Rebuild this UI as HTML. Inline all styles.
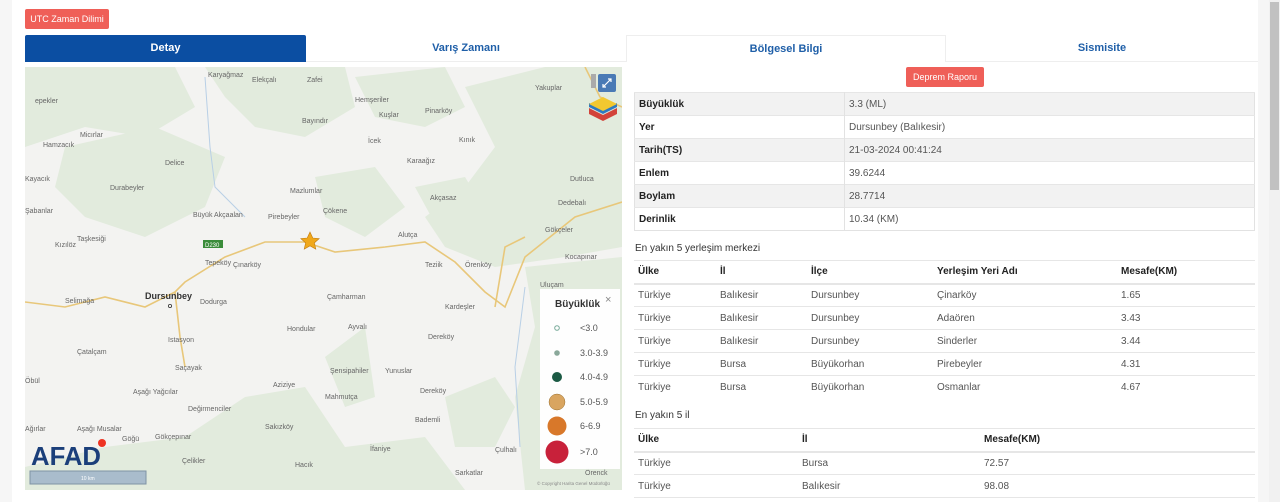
<!DOCTYPE html>
<html><head><meta charset="utf-8"><style>
*{box-sizing:border-box;margin:0;padding:0}
body{width:1280px;height:502px;overflow:hidden;background:#f6f6f6;font-family:"Liberation Sans",sans-serif;position:relative;color:#333}
.card{position:absolute;left:12px;top:0;width:1246px;height:502px;background:#fff}
.sb{position:absolute;left:1269px;top:0;width:11px;height:502px;background:#f1f1f1}
.sb div{position:absolute;left:1px;top:2px;width:9px;height:188px;background:#c1c1c1}
.btn{position:absolute;background:#ef5f58;color:#fff;font-size:9px;text-align:center;border-radius:2px;white-space:nowrap}
.tab{position:absolute;top:35px;height:27px;line-height:27px;text-align:center;font-size:11px;font-weight:bold;color:#1f5fa8}
.map{position:absolute;left:25px;top:67px;width:597px;height:423px;background:#f3f3f1;overflow:hidden}
.lbl{font-family:"Liberation Sans",sans-serif;font-size:7px;fill:#666}
table{position:absolute;border-collapse:collapse;font-size:10px}
td{height:23px;padding:0 4px;color:#555;border-top:1px solid #e6e6e6}
td.b,th{font-weight:bold;color:#222}
th{height:23px;text-align:left;padding:0 4px;border-top:1px solid #e6e6e6;border-bottom:2px solid #e6e6e6}
.st tr:nth-child(odd) td{background:#f2f2f2}
.st{border:1px solid #e2e2e2}
.st td:first-child{border-right:1px solid #e2e2e2}
.cap{position:absolute;font-size:10px;color:#333}
</style></head><body>
<div class="card"></div>
<div class="sb"><div></div></div>
<div class="btn" style="left:25px;top:9px;width:84px;height:20px;line-height:20px">UTC Zaman Dilimi</div>
<div class="tab" style="left:25px;width:281px;background:#0b4ea2;color:#fff;border-radius:2px 2px 0 0">Detay</div>
<div class="tab" style="left:306px;width:320px;border-bottom:1px solid #eee">Varış Zamanı</div>
<div class="tab" style="left:626px;width:320px;border:1px solid #eee;border-bottom:none">Bölgesel Bilgi</div>
<div class="tab" style="left:946px;width:312px;border-bottom:1px solid #eee">Sismisite</div>

<div class="map">
<svg width="597" height="423" viewBox="0 0 597 423">
<g fill="#e2ebdd">
<path d="M0 0 L150 0 L170 40 L120 70 L60 60 L0 80Z"/>
<path d="M40 80 L130 60 L200 90 L180 140 L120 170 L60 150 L30 120Z"/>
<path d="M180 0 L320 0 L330 40 L280 70 L230 60 L200 30Z"/>
<path d="M330 10 L420 0 L440 40 L400 60 L350 50Z"/>
<path d="M440 20 L520 0 L597 0 L597 180 L540 190 L470 200 L420 180 L400 150 L440 120 L470 80Z"/>
<path d="M290 110 L350 100 L380 140 L340 170 L300 150Z"/>
<path d="M390 120 L440 110 L470 160 L420 175Z"/>
<path d="M500 200 L597 190 L597 423 L500 423 L490 330 L510 260Z"/>
<path d="M300 290 L340 260 L350 330 L320 340Z"/>
<path d="M0 400 L80 380 L160 370 L220 330 L280 320 L320 380 L400 370 L440 423 L0 423Z"/>
<path d="M420 330 L470 310 L490 340 L470 380 L430 380Z"/>
</g>
<g fill="none" stroke="#e8c77a" stroke-width="1.6">
<path d="M0 235 L40 240 L80 230 L120 240 L150 225 L160 215 L200 190 L240 175 L280 175 L310 185 L360 180 L400 175 L430 195 L460 225 L480 240 L500 190 L550 150 L597 135"/>
<path d="M150 225 L155 270 L160 300"/>
<path d="M560 0 L575 30 L597 40"/>
<path d="M470 240 L480 180 L500 170"/>
</g>
<path d="M180 10 L185 80 L190 120 L220 150" fill="none" stroke="#b8cfe6" stroke-width="1"/>
<path d="M500 220 L490 300 L495 380" fill="none" stroke="#b8cfe6" stroke-width="1"/>
<g class="lbl">
<text x="183" y="10">Karyağmaz</text><text x="227" y="15">Elekçalı</text><text x="282" y="15">Zafei</text><text x="510" y="23">Yakuplar</text>
<text x="10" y="36">epekler</text><text x="330" y="35">Hemşeriler</text><text x="400" y="46">Pinarköy</text><text x="277" y="56">Bayındır</text><text x="354" y="50">Kuşlar</text>
<text x="18" y="80">Hamzacık</text><text x="55" y="70">Micırlar</text><text x="343" y="76">İcek</text><text x="434" y="75">Kınık</text>
<text x="140" y="98">Delice</text><text x="382" y="96">Karaağız</text>
<text x="0" y="114">Kayacık</text><text x="85" y="123">Durabeyler</text><text x="265" y="126">Mazlumlar</text><text x="545" y="114">Dutluca</text>
<text x="0" y="146">Şabanlar</text><text x="405" y="133">Akçasaz</text><text x="533" y="138">Dedebalı</text>
<text x="168" y="150">Büyük Akçaalan</text><text x="243" y="152">Pirebeyler</text><text x="298" y="146">Çökene</text>
<text x="52" y="174">Taşkesiği</text><text x="373" y="170">Alutça</text><text x="520" y="165">Gökçeler</text>
<text x="30" y="180">Kızılöz</text><text x="208" y="200">Çınarköy</text><text x="180" y="198">Tepeköy</text><text x="400" y="200">Teziik</text><text x="440" y="200">Örenköy</text><text x="540" y="192">Kocapınar</text>
<text x="40" y="236">Selimağa</text><text x="175" y="237">Dodurga</text><text x="302" y="232">Çamharman</text><text x="420" y="242">Kardeşler</text><text x="515" y="220">Uluçam</text>
<text x="262" y="264">Hondular</text><text x="323" y="262">Ayvalı</text><text x="143" y="275">Istasyon</text><text x="403" y="272">Dereköy</text>
<text x="52" y="287">Çatalçam</text><text x="150" y="303">Saçayak</text><text x="305" y="306">Şensipahiler</text><text x="360" y="306">Yunuslar</text>
<text x="0" y="316">Öbül</text><text x="248" y="320">Aziziye</text><text x="108" y="327">Aşağı Yağcılar</text><text x="395" y="326">Dereköy</text><text x="300" y="332">Mahmutça</text>
<text x="163" y="344">Değirmenciler</text><text x="240" y="362">Sakızköy</text><text x="390" y="355">Bademli</text>
<text x="0" y="364">Ağırlar</text><text x="52" y="364">Aşağı Musalar</text><text x="130" y="372">Gökçepınar</text><text x="97" y="374">Göğü</text>
<text x="345" y="384">İfaniye</text><text x="470" y="385">Çulhalı</text><text x="157" y="396">Çelikler</text><text x="270" y="400">Hacık</text><text x="430" y="408">Sarkatlar</text><text x="560" y="408">Örenck</text>
</g>
<text x="120" y="232" font-family="Liberation Sans" font-size="9" font-weight="bold" fill="#333">Dursunbey</text>
<circle cx="145" cy="239" r="1.6" fill="none" stroke="#333" stroke-width="0.8"/>
<rect x="178" y="173" width="20" height="8" fill="#3a8c3a"/><text x="180" y="180" font-size="6" fill="#fff" font-family="Liberation Sans">D230</text>
<path d="M285 165 l2.8 6 6.4 .6 -4.8 4.3 1.4 6.3 -5.8 -3.3 -5.8 3.3 1.4 -6.3 -4.8 -4.3 6.4 -.6z" fill="#f0a81a" stroke="#c07a10" stroke-width=".6"/>
<rect x="566" y="7" width="5" height="14" fill="#aaa"/>
<rect x="573" y="7" width="18" height="18" fill="#4a7ab5" rx="2"/><path d="M578 20 l8 -8 M583 12h3v3 M578 17v3h3" stroke="#fff" stroke-width="1.2" fill="none"/>
<path d="M578 48 l14 -7 l0 6 l-14 7 l-14 -7 l0 -6z" fill="#d2433a"/>
<path d="M578 43 l14 -7 l0 4 l-14 7 l-14 -7 l0 -4z" fill="#2e7ac0"/>
<path d="M578 30 l14 7 l-14 7 l-14 -7z" fill="#f2c830"/>
<text x="6" y="398" font-family="Liberation Sans" font-size="26" font-weight="bold" fill="#1b3f7a" textLength="70" lengthAdjust="spacingAndGlyphs">AFAD</text>
<circle cx="77" cy="376" r="4" fill="#e32"/>
<rect x="5" y="404" width="116" height="13" fill="#a9bccc" stroke="#7f93a5"/>
<text x="56" y="413" font-size="5" fill="#fff" font-family="Liberation Sans">10 km</text>
<text x="512" y="418" font-size="4.5" fill="#888" font-family="Liberation Sans">© Copyright Harita Genel Müdürlüğü</text>
<rect x="515" y="222" width="80" height="180" fill="#fff" opacity=".95"/>
<text x="530" y="240" font-family="Liberation Sans" font-size="10" font-weight="bold" fill="#333">Büyüklük</text>
<text x="580" y="236" font-family="Liberation Sans" font-size="11" fill="#888">×</text>
<g font-family="Liberation Sans" font-size="9" fill="#555">
<circle cx="532" cy="261" r="2.3" fill="none" stroke="#7a9" stroke-width="1"/><text x="555" y="264">&lt;3.0</text>
<circle cx="532" cy="286" r="2.8" fill="#8aa89a"/><text x="555" y="289">3.0-3.9</text>
<circle cx="532" cy="310" r="5" fill="#1b5a44"/><text x="555" y="313">4.0-4.9</text>
<circle cx="532" cy="335" r="8" fill="#d9a560" stroke="#9a7030" stroke-width=".5"/><text x="555" y="338">5.0-5.9</text>
<circle cx="532" cy="359" r="9.5" fill="#d8782a"/><text x="555" y="362">6-6.9</text>
<circle cx="532" cy="385" r="11.5" fill="#c8213a"/><text x="555" y="388">&gt;7.0</text>
</g>
</svg>
</div>

<div class="btn" style="left:906px;top:67px;width:78px;height:20px;line-height:20px">Deprem Raporu</div>
<table class="st" style="left:634px;top:92px;width:621px">
<tr><td class="b" style="width:210px">Büyüklük</td><td>3.3 (ML)</td></tr>
<tr><td class="b">Yer</td><td>Dursunbey (Balıkesir)</td></tr>
<tr><td class="b">Tarih(TS)</td><td>21-03-2024 00:41:24</td></tr>
<tr><td class="b">Enlem</td><td>39.6244</td></tr>
<tr><td class="b">Boylam</td><td>28.7714</td></tr>
<tr><td class="b">Derinlik</td><td>10.34 (KM)</td></tr>
</table>
<div class="cap" style="left:635px;top:243px">En yakın 5 yerleşim merkezi</div>
<table style="left:634px;top:260px;width:621px">
<tr><th style="width:82px">Ülke</th><th style="width:91px">İl</th><th style="width:126px">İlçe</th><th style="width:184px">Yerleşim Yeri Adı</th><th>Mesafe(KM)</th></tr>
<tr><td>Türkiye</td><td>Balıkesir</td><td>Dursunbey</td><td>Çinarköy</td><td>1.65</td></tr>
<tr><td>Türkiye</td><td>Balıkesir</td><td>Dursunbey</td><td>Adaören</td><td>3.43</td></tr>
<tr><td>Türkiye</td><td>Balıkesir</td><td>Dursunbey</td><td>Sinderler</td><td>3.44</td></tr>
<tr><td>Türkiye</td><td>Bursa</td><td>Büyükorhan</td><td>Pirebeyler</td><td>4.31</td></tr>
<tr><td>Türkiye</td><td>Bursa</td><td>Büyükorhan</td><td>Osmanlar</td><td>4.67</td></tr>
</table>
<div class="cap" style="left:635px;top:410px">En yakın 5 il</div>
<table style="left:634px;top:428px;width:621px">
<tr><th style="width:164px">Ülke</th><th style="width:182px">İl</th><th>Mesafe(KM)</th></tr>
<tr><td>Türkiye</td><td>Bursa</td><td>72.57</td></tr>
<tr><td style="border-bottom:1px solid #e6e6e6">Türkiye</td><td style="border-bottom:1px solid #e6e6e6">Balıkesir</td><td style="border-bottom:1px solid #e6e6e6">98.08</td></tr>
</table>
</body></html>
